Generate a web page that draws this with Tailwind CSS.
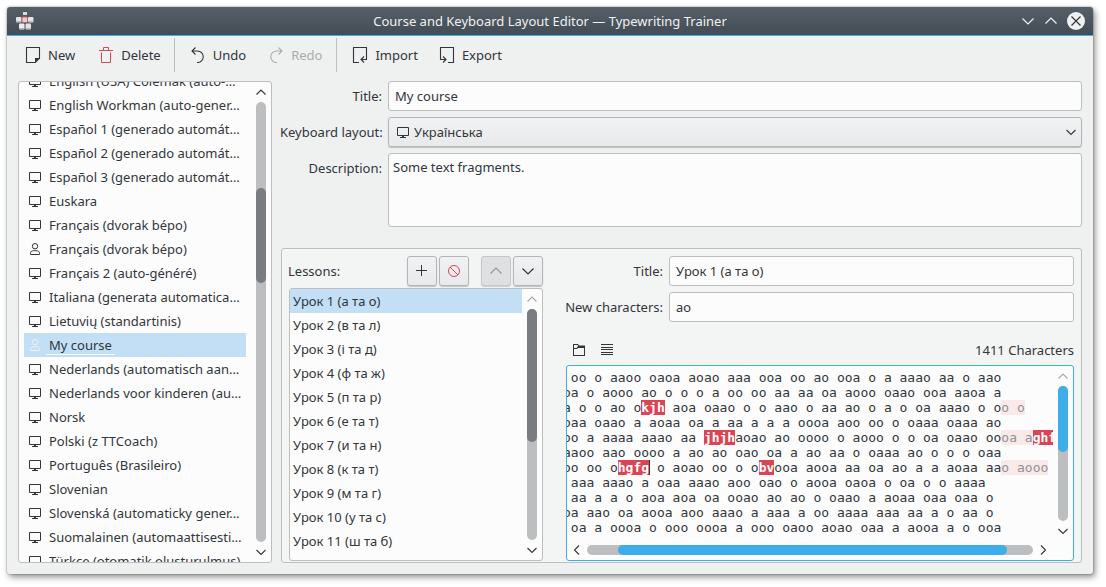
<!DOCTYPE html>
<html lang="en">
<head>
<meta charset="utf-8">
<meta name="viewport" content="width=device-width, initial-scale=1">
<title>Course and Keyboard Layout Editor — Typewriting Trainer</title>
<script src="https://cdn.jsdelivr.net/npm/@tailwindcss/browser@4"></script>
</head>
<body class="flex h-screen flex-col bg-white pt-[7px] pr-[13px] pb-[13px] pl-[7px] font-['Noto_Sans',sans-serif] text-[13px] leading-[18px] text-[#31363b]">

<svg class="hidden" aria-hidden="true">
  <symbol id="screen" viewBox="0 0 12 12"><path d="M0.5 1.5h11v8h-11z" fill="none" stroke="currentColor"/><path d="M5 10h2v1H5zM3 11h6v1H3z" fill="currentColor"/></symbol>
  <symbol id="person" viewBox="0 0 12 12"><circle cx="6" cy="3.200" r="2.700" fill="none" stroke="currentColor"/><path d="M1.500 11.500v-1.200c0-1.700 1.400-2.600 2.900-2.600h3.200c1.500 0 2.900 0.900 2.900 2.600v1.200z" fill="none" stroke="currentColor"/></symbol>
  <symbol id="up" viewBox="0 0 10 10"><path d="M0.500 7.500L5 3L9.500 7.500" fill="none" stroke="currentColor" stroke-width="1.100"/></symbol>
  <symbol id="down" viewBox="0 0 10 10"><path d="M0.500 3L5 7.500L9.500 3" fill="none" stroke="currentColor" stroke-width="1.100"/></symbol>
  <symbol id="left" viewBox="0 0 10 10"><path d="M7 0.500L2.500 5L7 9.500" fill="none" stroke="currentColor" stroke-width="1.100"/></symbol>
  <symbol id="right" viewBox="0 0 10 10"><path d="M3 0.500L7.500 5L3 9.500" fill="none" stroke="currentColor" stroke-width="1.100"/></symbol>
</svg>

<div class="flex min-h-0 flex-1 flex-col rounded-[3px] bg-[#eff0f0] shadow-[0_0_1px_1px_rgba(0,0,0,0.12),2px_3px_6px_rgba(0,0,0,0.45)]">

  <header class="flex h-[29px] shrink-0 items-center rounded-t-[3px] border-b border-[#3daee9] bg-linear-to-b from-[#566068] to-[#434c54] px-2">
    <svg class="h-5 w-[72px] shrink-0" viewBox="0 0 72 20" aria-hidden="true">
      <path d="M9.500 4V1.500H11" stroke="#20262b" fill="none" stroke-width="1.500"/>
      <rect x="8" y="1" width="4" height="3" fill="#dcdcdc"/>
      <rect x="1" y="6" width="5.500" height="5.500" rx="1" fill="#e4e4e4"/>
      <rect x="7" y="6" width="5.500" height="5.500" rx="1" fill="#d9d3d3" stroke="#d4585f"/>
      <rect x="13" y="6" width="5.500" height="5.500" rx="1" fill="#e4e4e4"/>
      <rect x="4" y="12.500" width="5.500" height="6" rx="1" fill="#ededed"/>
      <rect x="10.500" y="12.500" width="5.500" height="6" rx="1" fill="#e2e2e2"/>
      <path d="M1 10.500h5M13 10.500h5M4 17.500h5M10.500 17.500h5" stroke="#b4b6b8"/>
    </svg>
    <h1 class="flex-1 text-center text-[#eff0f1]">Course and Keyboard Layout Editor — Typewriting Trainer</h1>
    <div class="flex w-[72px] shrink-0 items-center justify-end gap-[9px] text-[#eff0f1]">
      <button type="button" aria-label="Minimize"><svg class="size-[14px]" viewBox="0 0 14 14"><path d="M1.500 4.500L7 10l5.500-5.500" fill="none" stroke="currentColor" stroke-width="1.200"/></svg></button>
      <button type="button" aria-label="Maximize"><svg class="size-[14px]" viewBox="0 0 14 14"><path d="M1.500 9.500L7 4l5.500 5.500" fill="none" stroke="currentColor" stroke-width="1.200"/></svg></button>
      <button type="button" aria-label="Close"><svg class="size-[18px]" viewBox="0 0 18 18"><circle cx="9" cy="9" r="9" fill="currentColor"/><path d="M4.500 4.500l9 9M13.500 4.500l-9 9" stroke="#31363b" stroke-width="1.200"/></svg></button>
    </div>
  </header>

  <div role="toolbar" aria-label="Main" class="flex h-[38px] shrink-0 items-center pl-[7px]">
    <button type="button" class="flex items-center gap-[7px] px-[11px]"><svg class="size-4" viewBox="0 0 16 16"><path d="M10.500 15.500H1.500V0.500h13v11" fill="none" stroke="currentColor" stroke-width="1.100"/><path d="M10 16v-5h5v0.500L10.500 16z" fill="currentColor"/></svg>New</button>
    <button type="button" class="flex items-center gap-[7px] pr-[10px] pl-3"><svg class="size-4" viewBox="0 0 16 16"><path d="M1 3.500h14M5.500 3V0.500h5V3M3.500 5.500v10h9v-10" fill="none" stroke="#da4453"/></svg>Delete</button>
    <div class="mx-[3px] h-[34px] w-px bg-[#bcbebf]"></div>
    <button type="button" class="ml-px flex items-center gap-[7px] px-[11px]"><svg class="size-4" viewBox="0 0 16 16"><path d="M5.500 0.500L2 4l3.500 3.500M2 4h5.500a5.750 5.750 0 0 1 0 11.500H7" fill="none" stroke="currentColor" stroke-width="1.100"/></svg>Undo</button>
    <button type="button" disabled class="flex items-center gap-[7px] px-[11px] text-[#a9acae]"><svg class="size-4" viewBox="0 0 16 16"><path d="M10.500 0.500L14 4l-3.500 3.500M14 4H8.500a5.750 5.750 0 0 0 0 11.500H9" fill="none" stroke="currentColor" stroke-width="1.100"/></svg>Redo</button>
    <div class="mx-[3px] h-[34px] w-px bg-[#bcbebf]"></div>
    <button type="button" class="ml-px flex items-center gap-[7px] pr-[10px] pl-[11px]"><svg class="size-4" viewBox="0 0 16 16"><path d="M7 15.500H1.500V0.500h13v12H9M12 9.500l-3 3 3 3" fill="none" stroke="currentColor" stroke-width="1.100"/></svg>Import</button>
    <button type="button" class="flex items-center gap-[7px] px-[11px]"><svg class="size-4" viewBox="0 0 16 16"><path d="M9 15.500h5.500V0.500H1.500v12H7M4 9.500l3 3-3 3" fill="none" stroke="currentColor" stroke-width="1.100"/></svg>Export</button>
  </div>

  <main class="flex min-h-0 flex-1 gap-2 pt-[7px] pr-[11px] pb-[11px] pl-[11px]">

    <nav aria-label="Courses" class="flex w-[254px] shrink-0 rounded-[3px] border border-[#bcbebf] bg-[#fcfcfc]">
      <div class="min-w-0 flex-1 overflow-hidden pl-[5px]">
        <ul class="-mt-[13px] w-[222px] whitespace-nowrap">
          <li class="flex h-6 items-center gap-2 px-[5px]"><svg class="size-3 shrink-0"><use href="#screen"/></svg>English (USA) Colemak (auto-…</li>
          <li class="flex h-6 items-center gap-2 px-[5px]"><svg class="size-3 shrink-0"><use href="#screen"/></svg>English Workman (auto-gener…</li>
          <li class="flex h-6 items-center gap-2 px-[5px]"><svg class="size-3 shrink-0"><use href="#screen"/></svg>Español 1 (generado automát…</li>
          <li class="flex h-6 items-center gap-2 px-[5px]"><svg class="size-3 shrink-0"><use href="#screen"/></svg>Español 2 (generado automát…</li>
          <li class="flex h-6 items-center gap-2 px-[5px]"><svg class="size-3 shrink-0"><use href="#screen"/></svg>Español 3 (generado automát…</li>
          <li class="flex h-6 items-center gap-2 px-[5px]"><svg class="size-3 shrink-0"><use href="#screen"/></svg>Euskara</li>
          <li class="flex h-6 items-center gap-2 px-[5px]"><svg class="size-3 shrink-0"><use href="#screen"/></svg>Français (dvorak bépo)</li>
          <li class="flex h-6 items-center gap-2 px-[5px]"><svg class="size-3 shrink-0"><use href="#person"/></svg>Français (dvorak bépo)</li>
          <li class="flex h-6 items-center gap-2 px-[5px]"><svg class="size-3 shrink-0"><use href="#screen"/></svg>Français 2 (auto-généré)</li>
          <li class="flex h-6 items-center gap-2 px-[5px]"><svg class="size-3 shrink-0"><use href="#screen"/></svg>Italiana (generata automatica…</li>
          <li class="flex h-6 items-center gap-2 px-[5px]"><svg class="size-3 shrink-0"><use href="#screen"/></svg>Lietuvių (standartinis)</li>
          <li aria-current="true" class="flex h-6 items-center gap-[5px] bg-[#c2dff5] px-[5px]"><svg class="size-3 shrink-0 text-[#eff0f1]"><use href="#person"/></svg><span class="border-b border-[#fcfcfc] px-[3px] pt-px">My course</span></li>
          <li class="flex h-6 items-center gap-2 px-[5px]"><svg class="size-3 shrink-0"><use href="#screen"/></svg>Nederlands (automatisch aan…</li>
          <li class="flex h-6 items-center gap-2 px-[5px]"><svg class="size-3 shrink-0"><use href="#screen"/></svg>Nederlands voor kinderen (au…</li>
          <li class="flex h-6 items-center gap-2 px-[5px]"><svg class="size-3 shrink-0"><use href="#screen"/></svg>Norsk</li>
          <li class="flex h-6 items-center gap-2 px-[5px]"><svg class="size-3 shrink-0"><use href="#screen"/></svg>Polski (z TTCoach)</li>
          <li class="flex h-6 items-center gap-2 px-[5px]"><svg class="size-3 shrink-0"><use href="#screen"/></svg>Português (Brasileiro)</li>
          <li class="flex h-6 items-center gap-2 px-[5px]"><svg class="size-3 shrink-0"><use href="#screen"/></svg>Slovenian</li>
          <li class="flex h-6 items-center gap-2 px-[5px]"><svg class="size-3 shrink-0"><use href="#screen"/></svg>Slovenská (automaticky gener…</li>
          <li class="flex h-6 items-center gap-2 px-[5px]"><svg class="size-3 shrink-0"><use href="#screen"/></svg>Suomalainen (automaattisesti…</li>
          <li class="flex h-6 items-center gap-2 px-[5px]"><svg class="size-3 shrink-0"><use href="#screen"/></svg>Türkçe (otomatik oluşturulmuş)</li>
        </ul>
      </div>
      <div class="flex w-5 shrink-0 flex-col items-center gap-[5px] py-[5px]">
        <svg class="size-[10px] shrink-0"><use href="#up"/></svg>
        <div class="flex w-[10px] flex-1 flex-col rounded-full bg-[#bdbec0]"><div class="h-[86px] shrink-0"></div><div class="h-[95px] rounded-full bg-[#797c80]"></div></div>
        <svg class="size-[10px] shrink-0"><use href="#down"/></svg>
      </div>
    </nav>

    <div class="flex min-w-0 flex-1 flex-col">
      <form class="grid grid-cols-[102px_minmax(0,1fr)] gap-[6px]">
        <label for="course-title" class="self-center text-right">Title:</label>
        <input id="course-title" type="text" value="My course" class="h-[30px] rounded-[3px] border border-[#bcbebf] bg-[#fcfcfc] px-[6px]">
        <label for="layout" class="self-center text-right whitespace-nowrap">Keyboard layout:</label>
        <div class="relative">
          <select id="layout" class="block h-[30px] w-full appearance-none rounded-[3px] border border-[#b3b5b6] bg-linear-to-b from-[#f1f2f3] to-[#e8e9ea] pl-[25px] shadow-[0_1px_1px_rgba(0,0,0,0.2)]"><option>Українська</option></select>
          <svg class="pointer-events-none absolute top-[9px] left-[9px] size-3"><use href="#screen"/></svg>
          <svg class="pointer-events-none absolute top-[10px] right-[6px] size-[10px]"><use href="#down"/></svg>
        </div>
        <label for="description" class="pt-[6px] text-right">Description:</label>
        <textarea id="description" class="h-[74px] resize-none rounded-[3px] border border-[#bcbebf] bg-[#fcfcfc] px-1 py-1">Some text fragments.</textarea>
      </form>

      <section class="mt-[21px] ml-px flex min-h-0 flex-1 gap-[22px] rounded-[3px] border border-[#bcbebf] bg-[#f3f4f4] pt-[7px] pr-[7px] pb-px pl-[6px]">
        <div class="flex w-[255px] shrink-0 flex-col gap-[2px]">
          <div class="flex items-center gap-[2px]">
            <h2 class="flex-1">Lessons:</h2>
            <button type="button" aria-label="Add lesson" class="flex size-[30px] items-center justify-center rounded-[3px] border border-[#b3b5b6] bg-linear-to-b from-[#f1f2f3] to-[#e8e9ea] shadow-[0_1px_1px_rgba(0,0,0,0.2)]"><svg class="size-3" viewBox="0 0 12 12"><path d="M5.500 0v11M0 5.500h11" stroke="currentColor"/></svg></button>
            <button type="button" aria-label="Remove lesson" class="mr-[10px] flex size-[30px] items-center justify-center rounded-[3px] border border-[#b3b5b6] bg-linear-to-b from-[#f1f2f3] to-[#e8e9ea] shadow-[0_1px_1px_rgba(0,0,0,0.2)]"><svg class="size-3" viewBox="0 0 12 12"><path d="M2 2l8 8" stroke="#da4453"/><circle cx="6" cy="6" r="5.500" fill="none" stroke="#da4453"/></svg></button>
            <button type="button" disabled aria-label="Move up" class="flex size-[30px] items-center justify-center rounded-[3px] border border-[#c6c7c9] bg-[#dfe0e2] text-[#96999c] shadow-[0_1px_1px_rgba(0,0,0,0.15)]"><svg class="size-[14px]" viewBox="0 0 14 14"><path d="M1.500 9.500L7 4l5.500 5.500" fill="none" stroke="currentColor" stroke-width="1.200"/></svg></button>
            <button type="button" aria-label="Move down" class="flex size-[30px] items-center justify-center rounded-[3px] border border-[#b3b5b6] bg-linear-to-b from-[#f1f2f3] to-[#e8e9ea] shadow-[0_1px_1px_rgba(0,0,0,0.2)]"><svg class="size-[14px]" viewBox="0 0 14 14"><path d="M1.500 4.500L7 10l5.500-5.500" fill="none" stroke="currentColor" stroke-width="1.200"/></svg></button>
          </div>
          <div class="ml-px flex min-h-0 flex-1 rounded-[3px] border border-[#bcbebf] bg-[#fcfcfc]">
            <ul class="min-w-0 flex-1 overflow-hidden whitespace-nowrap">
              <li aria-current="true" class="flex h-6 items-center bg-[#c2dff5] px-[3px]">Урок 1 (а та о)</li>
              <li class="flex h-6 items-center px-[3px]">Урок 2 (в та л)</li>
              <li class="flex h-6 items-center px-[3px]">Урок 3 (і та д)</li>
              <li class="flex h-6 items-center px-[3px]">Урок 4 (ф та ж)</li>
              <li class="flex h-6 items-center px-[3px]">Урок 5 (п та р)</li>
              <li class="flex h-6 items-center px-[3px]">Урок 6 (е та т)</li>
              <li class="flex h-6 items-center px-[3px]">Урок 7 (и та н)</li>
              <li class="flex h-6 items-center px-[3px]">Урок 8 (к та т)</li>
              <li class="flex h-6 items-center px-[3px]">Урок 9 (м та г)</li>
              <li class="flex h-6 items-center px-[3px]">Урок 10 (у та с)</li>
              <li class="flex h-6 items-center px-[3px]">Урок 11 (ш та б)</li>
            </ul>
            <div class="flex w-5 shrink-0 flex-col items-center gap-[5px] py-[5px]">
              <svg class="size-[10px] shrink-0 text-[#a4a7a9]"><use href="#up"/></svg>
              <div class="w-[10px] flex-1 rounded-full bg-[#bdbec0]"><div class="h-[133px] rounded-full bg-[#797c80]"></div></div>
              <svg class="size-[10px] shrink-0"><use href="#down"/></svg>
            </div>
          </div>
        </div>

        <div class="flex min-w-0 flex-1 flex-col">
          <div class="grid grid-cols-[98px_minmax(0,1fr)] items-center gap-[6px]">
            <label for="lesson-title" class="text-right">Title:</label>
            <input id="lesson-title" type="text" value="Урок 1 (а та о)" class="h-[30px] rounded-[3px] border border-[#bcbebf] bg-[#fcfcfc] px-[6px]">
            <label for="new-chars" class="text-right whitespace-nowrap">New characters:</label>
            <input id="new-chars" type="text" value="ао" class="h-[30px] rounded-[3px] border border-[#bcbebf] bg-[#fcfcfc] px-[6px]">
          </div>
          <div class="mt-[19px] mb-[6px] flex h-[18px] items-center gap-4 pl-2">
            <button type="button" aria-label="Open file"><svg class="size-3" viewBox="0 0 12 12"><path d="M0 0h5l1 1.500h6V12H0zM1 3.500V11h10V4H5L4 5H1M1 1v3h2.500l1-1L5 1.500 4.500 1z" fill="currentColor" fill-rule="evenodd"/></svg></button>
            <button type="button" aria-label="Format text"><svg class="size-3" viewBox="0 0 12 12"><path d="M0 0.500h12M0 3.500h12M0 5.500h12M0 8.500h12M0 10.500h12" stroke="currentColor"/></svg></button>
            <p class="flex-1 text-right">1411 Characters</p>
          </div>
          <div class="ml-px flex min-h-0 flex-1 flex-col rounded-[3px] border border-[#3daee9] bg-[#fcfcfc]">
            <div class="flex min-h-0 flex-1">
              <div role="textbox" aria-multiline="true" aria-label="Lesson text" contenteditable="true" spellcheck="false" class="min-w-0 flex-1 overflow-hidden pt-1 font-['DejaVu_Sans_Mono',monospace] leading-[15px] whitespace-pre outline-none"><div class="-ml-1"><div> oo o aaoo oaoa aoao aaa ooa oo ao ooa o a aaao aa o aao</div><div>oa o aooo ao o o o a oo oo aa aa oa aooo oaao ooa aaoa a</div><div>a o o ao o<b class="bg-[#da4453] text-[#fcfcfc]">kjh</b> aoa oaao o o aao o aa ao o a o oa aaao o o<span class="bg-[#fae9e9] text-[#8f9294]">o o</span></div><div>oaa oaao a aoaa oa a aa a a a oooa aoo oo o oaaa oaaa ao</div><div>oo a aaaa aaao aa <b class="bg-[#da4453] text-[#fcfcfc]">jhjh</b>aoao ao oooo o aooo o o oa oaao oo<span class="bg-[#fae9e9] text-[#8f9294]">oa a</span><b class="bg-[#da4453] text-[#fcfcfc]">ghf</b></div><div>aaoo aao oooo a ao ao oao oa a ao aa o oaaa ao o o o oaa</div><div>oo oo o<b class="bg-[#da4453] text-[#fcfcfc]">hgfg</b><span class="-mr-px border-l border-[#31363b]"></span> o aoao oo o o<b class="bg-[#da4453] text-[#fcfcfc]">bv</b>ooa aooa aa oa ao a a aoaa aa<span class="bg-[#fae9e9] text-[#8f9294]">o aooo</span></div><div> aaa aaao a oaa aaao aoo oao o aooa oaoa o oa o o aaaa</div><div> aa a a o aoa aoa oa ooao ao ao o oaao a aoaa oaa oaa o</div><div>oa aao oa aooa aoo aaao a aaa a oo aaaa aaa aa a o aa o</div><div> oa a oooa o ooo oooa a ooo oaoo aoao oaa a aooa a o ooa</div></div></div>
              <div class="flex w-5 shrink-0 flex-col items-center gap-[5px] pt-[5px]">
                <svg class="size-[10px] shrink-0 text-[#a4a7a9]"><use href="#up"/></svg>
                <div class="w-[10px] flex-1 rounded-full bg-[#bdbec0]"><div class="h-[66px] rounded-full bg-[#3daee9]"></div></div>
                <svg class="size-[10px] shrink-0"><use href="#down"/></svg>
              </div>
            </div>
            <div class="mt-1 flex h-5 shrink-0 items-center gap-[5px] pr-[25px] pl-[5px]">
              <svg class="size-[10px] shrink-0"><use href="#left"/></svg>
              <div class="h-[10px] flex-1 rounded-full bg-[#bdbec0] pr-[26px] pl-[31px]"><div class="h-[10px] rounded-full bg-[#3daee9]"></div></div>
              <svg class="size-[10px] shrink-0"><use href="#right"/></svg>
            </div>
          </div>
        </div>
      </section>
    </div>
  </main>
</div>
</body>
</html>
